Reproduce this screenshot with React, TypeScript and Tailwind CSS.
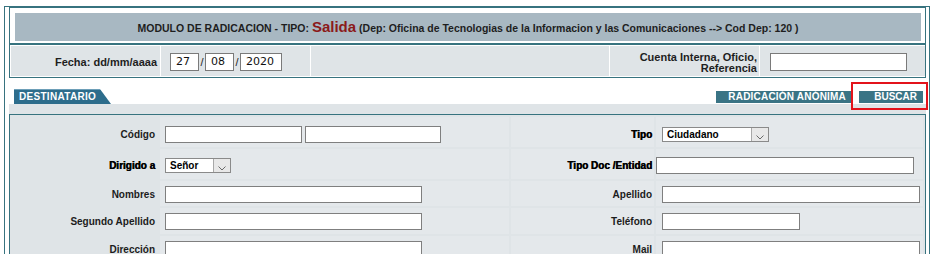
import type { ReactNode } from 'react'

function TextBox({ className }: { className: string }) {
  return <div className={`h-[17px] bg-white border border-[#7f7f7f] ${className}`} />
}

function DateBox({ value, className }: { value: string; className: string }) {
  return (
    <div
      className={`h-[18px] bg-white border border-[#7a7a7a] pl-[5px] font-normal text-[11px] leading-[16px] text-[#111] font-['DejaVu_Sans',sans-serif] ${className}`}
    >
      {value}
    </div>
  )
}

function Select({ value, className }: { value: string; className: string }) {
  return (
    <div className={`flex h-[15px] bg-white border border-[#8a8a8a] ${className}`}>
      <span className="flex-1 pl-[4px] text-[10px] leading-[13px] text-black">{value}</span>
      <span className="w-[17px] border-l border-[#a8a8a8] bg-[#e8e8e8] flex items-end justify-center pb-[1px]">
        <svg width="8" height="5" viewBox="0 0 8 5">
          <path d="M0.5 0.5 L4 4 L7.5 0.5" fill="none" stroke="#6a6a6a" strokeWidth="1" />
        </svg>
      </span>
    </div>
  )
}

type FormRow = {
  h: string
  pad: string
  left: string
  leftHeavy?: boolean
  leftField: ReactNode
  right: string
  rightHeavy?: boolean
  rightField: ReactNode
  rightPad?: string
}

const rows: FormRow[] = [
  {
    h: 'h-[30px]',
    pad: 'pt-[4px]',
    left: 'Código',
    leftField: (
      <div className="flex gap-[3px]">
        <TextBox className="w-[137px]" />
        <TextBox className="w-[136px]" />
      </div>
    ),
    right: 'Tipo',
    rightHeavy: true,
    rightField: <Select value="Ciudadano" className="w-[107px]" />,
  },
  {
    h: 'h-[30px]',
    pad: 'pt-[3px]',
    left: 'Dirigido a',
    leftHeavy: true,
    leftField: <Select value="Señor" className="w-[66px]" />,
    right: 'Tipo Doc /Entidad',
    rightHeavy: true,
    rightField: <TextBox className="w-[258px]" />,
    rightPad: 'pl-0',
  },
  {
    h: 'h-[25px]',
    pad: 'pt-[2px]',
    left: 'Nombres',
    leftField: <TextBox className="w-[257px]" />,
    right: 'Apellido',
    rightField: <TextBox className="w-[258px]" />,
  },
  {
    h: 'h-[26px]',
    pad: 'pt-0',
    left: 'Segundo Apellido',
    leftField: <TextBox className="w-[257px]" />,
    right: 'Teléfono',
    rightField: <TextBox className="w-[138px]" />,
  },
  {
    h: 'h-[26px]',
    pad: 'pt-0',
    left: 'Dirección',
    leftField: <TextBox className="w-[257px]" />,
    right: 'Mail',
    rightField: <TextBox className="w-[258px]" />,
  },
]

function Label({ text, heavy }: { text: string; heavy?: boolean }) {
  return (
    <span
      className={
        heavy
          ? 'text-[10px] text-black [text-shadow:0.5px_0_0_#000]'
          : 'text-[10px] text-[#1c1c1c]'
      }
    >
      {text}
    </span>
  )
}

export default function App() {
  return (
    <div className="relative w-[935px] h-[254px] overflow-hidden bg-white font-['Liberation_Sans',Arial,sans-serif] font-bold text-[11px] text-[#1e1e1e]">
      <div className="mt-[6px] ml-[4px] w-[926px] h-[260px] border-l border-t border-r border-[#37737f] pl-[4px] pr-[3px]">
        {/* encabezado */}
        <div className="border border-[#37737f]">
          <div className="pt-[5px] pl-[5px] pr-[4px] pb-[2px] border-b-2 border-[#37737f]">
            <div className="h-[28px] bg-[#a8b8c2] flex items-center justify-center pt-[1px] text-[10.5px]">
              <span>
                MODULO DE RADICACION - TIPO:{' '}
                <span className="text-[15px] text-[#8b1a1a]">Salida</span>{' '}
                {'(Dep: Oficina de Tecnologias de la Informacion y las Comunicaciones --> Cod Dep: 120 )'}
              </span>
            </div>
          </div>
          <div className="flex gap-px pl-[1px] py-px">
            <div className="w-[149px] h-[30px] bg-[#dfe4e7] flex items-center justify-end pr-[3px] pt-[2px]">
              Fecha: dd/mm/aaaa
            </div>
            <div className="w-[149px] h-[30px] bg-[#dfe4e7] flex items-center pl-[9px] pt-[2px]">
              <DateBox value="27" className="w-[29px]" />
              <span className="w-[6px] text-center font-normal">/</span>
              <DateBox value="08" className="w-[29px]" />
              <span className="w-[6px] text-center font-normal">/</span>
              <DateBox value="2020" className="w-[42px]" />
            </div>
            <div className="w-[298px] h-[30px] bg-[#dfe4e7]" />
            <div className="w-[149px] h-[30px] bg-[#dfe4e7] flex items-center justify-end pr-[2px] pt-[3px] text-right leading-[11px]">
              Cuenta Interna, Oficio,
              <br />
              Referencia
            </div>
            <div className="flex-1 h-[30px] bg-[#dfe4e7] flex items-center pl-[10px] pt-[2px]">
              <div className="w-[137px] h-[18px] bg-white border border-[#7a7a7a]" />
            </div>
          </div>
        </div>

        {/* destinatario */}
        <div className="flex items-end h-[26px]">
          <div className="ml-[5px] w-[97px] h-[15px] [clip-path:polygon(0_0,86px_0,97px_100%,0_100%)] bg-[linear-gradient(to_bottom,#6d9fb8_1px,#2d6d8c_1px)] text-white text-[10px] leading-[15px] pl-[5px] tracking-[0.3px]">
            DESTINATARIO
          </div>
          <div className="ml-auto mr-[3px] mb-[1px] flex gap-[7px]">
            <div className="w-[136px] h-[12px] bg-[#3a7485] text-white text-[10px] leading-[12px] text-right pr-[6px] tracking-[0.2px]">
              RADICACIÓN ANÓNIMA
            </div>
            <div className="w-[64px] h-[12px] bg-[#3a7485] text-white text-[10px] leading-[12px] text-right pr-[6px]">
              BUSCAR
            </div>
          </div>
        </div>
        <div className="h-[10px] bg-[#dfe4e7]" />
        <div className="border-l border-t border-r border-[#37737f] bg-[#dfe4e7] pt-[2px] pl-[1px] pr-[2px] flex flex-col gap-[2px] h-[200px]">
          {rows.map((r) => (
            <div key={r.left} className={`flex gap-[2px] ${r.h}`}>
              <div className={`w-[147px] bg-[#dfe4e7] flex items-center justify-end pr-[3px] ${r.pad}`}>
                <Label text={r.left} heavy={r.leftHeavy} />
              </div>
              <div className={`w-[349px] bg-[#e4e8eb] flex items-center pl-[5px] ${r.pad}`}>{r.leftField}</div>
              <div className={`w-[143px] bg-[#e4e8eb] flex items-center justify-end pr-[2px] ${r.pad}`}>
                <Label text={r.right} heavy={r.rightHeavy} />
              </div>
              <div className={`flex-1 bg-[#e4e8eb] flex items-center ${r.rightPad ?? 'pl-[6px]'} ${r.pad}`}>
                {r.rightField}
              </div>
            </div>
          ))}
        </div>
      </div>

      {/* resaltado */}
      <div className="absolute left-[851px] top-[82px] w-[77px] h-[28px] border-2 border-[#e3131b]" />
    </div>
  )
}
